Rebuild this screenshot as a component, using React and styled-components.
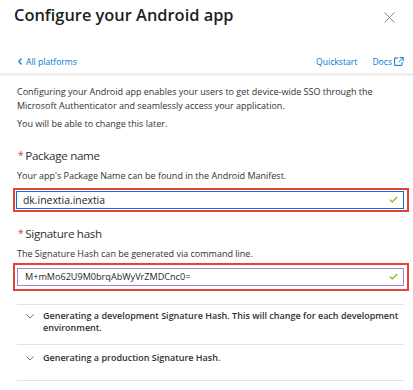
import React from "react";
import styled, { createGlobalStyle } from "styled-components";

const Global = createGlobalStyle`
  html, body { margin: 0; padding: 0; background: #fff; }
  body { font-family: "Open Sans", "Noto Sans", sans-serif; color: #323130; }
  * { box-sizing: border-box; }
`;

const Page = styled.div`
  width: 413px;
  height: 390px;
  overflow: hidden;
  background: #fff;
`;

const Header = styled.div`
  display: flex;
  justify-content: space-between;
  align-items: flex-start;
  padding: 2px 18px 0 14px;
  height: 50px;
`;

const Title = styled.h1`
  margin: 0;
  font-size: 16.4px;
  font-weight: 600;
  line-height: 26px;
  color: #201f1e;
`;

const Close = styled.button`
  border: 0;
  background: none;
  padding: 0;
  margin-top: 10px;
  width: 11px;
  height: 11px;
  display: flex;
`;

const NavRow = styled.div`
  display: flex;
  align-items: center;
  justify-content: space-between;
  padding: 0 9px 0 18px;
  height: 23px;
  font-size: 8.6px;
`;

const NavLink = styled.a`
  color: #0078d4;
  text-decoration: none;
  display: inline-flex;
  align-items: center;
  gap: ${(p) => p.$gap || 0}px;
`;

const NavRight = styled.div`
  display: flex;
  gap: 15px;
`;

const Band = styled.div`
  height: 3px;
  background: #efefef;
`;

const Content = styled.div`
  padding: 9px 9px 0 17px;
`;

const Para = styled.p`
  margin: 0 0 ${(p) => p.$mb || 0}px;
  font-size: 9px;
  line-height: 13.5px;
  color: #323130;
`;

const Label = styled.div`
  font-size: 11.6px;
  letter-spacing: -0.3px;
  line-height: 16px;
  margin: ${(p) => p.$mt}px 0 6px 1px;
  color: #323130;
  &::before {
    content: "*";
    color: #d13438;
    font-size: 10px;
    margin-right: 2px;
    vertical-align: top;
    position: relative;
    top: -1px;
  }
`;

const Helper = styled.div`
  font-size: 9px;
  line-height: 12px;
  margin-bottom: ${(p) => p.$mb}px;
`;

const Highlight = styled.div`
  margin-left: -4px;
  border: 2px solid #e5403e;
  padding: ${(p) => p.$pad};
  width: 396px;
`;

const Field = styled.div`
  height: 18px;
  border: ${(p) => (p.$focus ? "1.5px solid #0078d4" : "1px solid #a67fd3")};
  display: flex;
  align-items: center;
  justify-content: space-between;
  padding: 0 5px 0 ${(p) => p.$pl}px;
  font-size: ${(p) => p.$fs}px;
  color: #201f1e;
`;

const Accordion = styled.div`
  margin-top: 13px;
  border-top: 1px solid #e1e1e1;
  width: 387px;
`;

const Item = styled.div`
  display: flex;
  align-items: flex-start;
  gap: 9px;
  padding: ${(p) => p.$pad};
  border-bottom: 1px solid #e1e1e1;
  font-size: 9px;
  font-weight: 600;
  line-height: 12px;
  color: #323130;
`;

const Chev = styled.span`
  display: flex;
  width: 8px;
  margin-left: 9px;
  margin-top: 4px;
`;

const Check = () => (
  <svg width="9" height="7" viewBox="0 0 9 7">
    <path d="M0.7 3.6 L3.3 6 L8.3 0.8" fill="none" stroke="#6bb700" strokeWidth="1.1" />
  </svg>
);

const Down = () => (
  <Chev>
    <svg width="8" height="5" viewBox="0 0 8 5">
      <path d="M0.5 0.5 L4 4 L7.5 0.5" fill="none" stroke="#605e5c" strokeWidth="0.9" />
    </svg>
  </Chev>
);

export default function App() {
  return (
    <Page>
      <Global />
      <Header>
        <Title>Configure your Android app</Title>
        <Close aria-label="Close">
          <svg width="11" height="11" viewBox="0 0 11 11">
            <path d="M0.5 0.5 L10.5 10.5 M10.5 0.5 L0.5 10.5" stroke="#8a8886" strokeWidth="1" />
          </svg>
        </Close>
      </Header>
      <NavRow>
        <NavLink href="#" $gap={4}>
          <svg width="4" height="7" viewBox="0 0 4 7">
            <path d="M3.5 0.5 L0.8 3.5 L3.5 6.5" fill="none" stroke="#0078d4" strokeWidth="1.2" />
          </svg>
          All platforms
        </NavLink>
        <NavRight>
          <NavLink href="#">Quickstart</NavLink>
          <NavLink href="#" $gap={2}>
            Docs
            <svg width="10" height="9" viewBox="0 0 10 9">
              <path d="M4 1 H0.6 V8.4 H8 V5 M5.5 0.6 H9.2 V4.3 M9.2 0.6 L4.6 5.2" fill="none" stroke="#0078d4" strokeWidth="1" />
            </svg>
          </NavLink>
        </NavRight>
      </NavRow>
      <Band />
      <Content>
        <Para $mb={5}>
          Configuring your Android app enables your users to get device-wide SSO through the
          Microsoft Authenticator and seamlessly access your application.
        </Para>
        <Para>You will be able to change this later.</Para>
        <Label $mt={17}>Package name</Label>
        <Helper $mb={6}>Your app's Package Name can be found in the Android Manifest.</Helper>
        <Highlight $pad="1px 3px 1px 1px">
          <Field $focus $pl={6} $fs={10.4}>
            <span>dk.inextia.inextia</span>
            <Check />
          </Field>
        </Highlight>
        <Label $mt={14}>Signature hash</Label>
        <Helper $mb={3}>The Signature Hash can be generated via command line.</Helper>
        <Highlight $pad="3px 3px 3px 2px">
          <Field $pl={7} $fs={9.1}>
            <span>M+mMo62U9M0brqAbWyVrZMDCnc0=</span>
            <Check />
          </Field>
        </Highlight>
        <Accordion>
          <Item $pad="5px 0 10px 0">
            <Down />
            <span>
              Generating a development Signature Hash. This will change for each development
              environment.
            </span>
          </Item>
          <Item $pad="7px 0 16px 0">
            <Down />
            <span>Generating a production Signature Hash.</span>
          </Item>
        </Accordion>
      </Content>
    </Page>
  );
}
